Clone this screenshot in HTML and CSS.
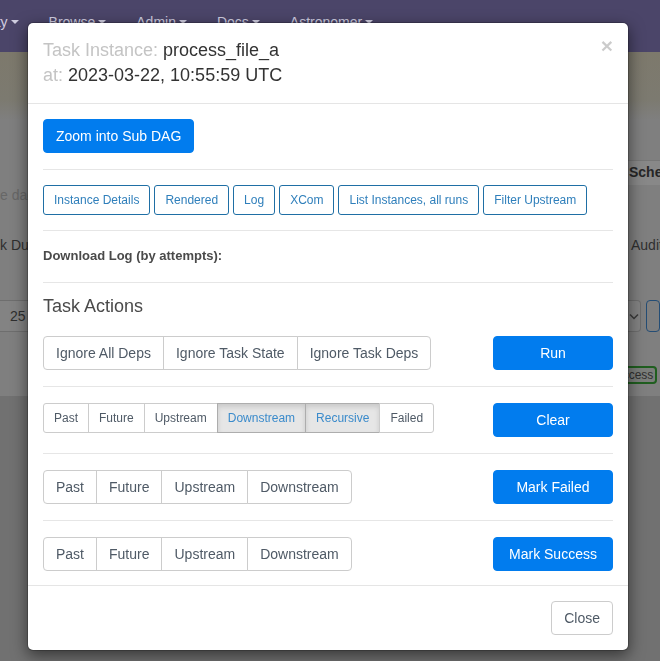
FILE: index.html
```html
<!DOCTYPE html>
<html>
<head>
<meta charset="utf-8">
<title>Task Instance</title>
<link rel="stylesheet" href="styles.css">
</head>
<body>
<div class="page">
  <nav class="navbar">
    <ul class="nav-menu">
      <li class="nav-item nav-first">Security<span class="caret"></span></li>
      <li class="nav-item">Browse<span class="caret"></span></li>
      <li class="nav-item">Admin<span class="caret"></span></li>
      <li class="nav-item">Docs<span class="caret"></span></li>
      <li class="nav-item">Astronomer<span class="caret"></span></li>
    </ul>
  </nav>
  <div class="alert-band"></div>
  <div class="bg-content">
    <div class="bg-row row-tabs"><div class="bg-left"></div><div></div><div class="tab">Schedule</div></div>
    <div class="bg-row row-desc"><div class="bg-left muted-text">e dag runs</div></div>
    <div class="bg-row row-labels"><div class="bg-left dark-text">k Duration</div><div></div><div class="check-label"><span class="checkbox"></span>Audit Log</div></div>
    <div class="bg-row row-controls">
      <div class="bg-left select-left">25</div><div></div>
      <div class="controls-right">
        <span class="select-right"><svg width="10" height="7" viewBox="0 0 10 7"><path d="M1 1.5 L5 5.5 L9 1.5" fill="none" stroke="#3a3a3a" stroke-width="1.5"/></svg></span>
        <span class="blue-box"></span>
      </div>
    </div>
    <div class="bg-row row-badge"><div class="bg-left"></div><div></div><div class="badge">success</div></div>
  </div>
  <div class="bg-lower"></div>
</div>

<div class="modal">
  <div class="modal-dialog">
    <div class="modal-content">
      <div class="modal-header">
        <button class="close" type="button">×</button>
        <h4 class="modal-title"><span class="lbl">Task Instance:</span> process_file_a<br><span class="lbl">at:</span> 2023-03-22, 10:55:59 UTC</h4>
      </div>
      <div class="modal-body">
        <button class="btn btn-primary" type="button">Zoom into Sub DAG</button>
        <hr class="divider divider-first">
        <div class="link-row">
          <button class="btn btn-sm btn-link-outline" type="button">Instance Details</button>
          <button class="btn btn-sm btn-link-outline" type="button">Rendered</button>
          <button class="btn btn-sm btn-link-outline" type="button">Log</button>
          <button class="btn btn-sm btn-link-outline" type="button">XCom</button>
          <button class="btn btn-sm btn-link-outline" type="button">List Instances, all runs</button>
          <button class="btn btn-sm btn-link-outline" type="button">Filter Upstream</button>
        </div>
        <hr class="divider">
        <div class="download">Download Log (by attempts):</div>
        <hr class="divider divider-download">
        <h4 class="section-title">Task Actions</h4>

        <div class="action-row">
          <div class="btn-group">
            <button class="btn btn-default" type="button">Ignore All Deps</button>
            <button class="btn btn-default" type="button">Ignore Task State</button>
            <button class="btn btn-default" type="button">Ignore Task Deps</button>
          </div>
          <button class="btn btn-primary btn-action" type="button">Run</button>
        </div>
        <hr class="divider divider-action">

        <div class="action-row">
          <div class="btn-group">
            <button class="btn btn-sm btn-default" type="button">Past</button>
            <button class="btn btn-sm btn-default" type="button">Future</button>
            <button class="btn btn-sm btn-default" type="button">Upstream</button>
            <button class="btn btn-sm btn-default active" type="button">Downstream</button>
            <button class="btn btn-sm btn-default active" type="button">Recursive</button>
            <button class="btn btn-sm btn-default" type="button">Failed</button>
          </div>
          <button class="btn btn-primary btn-action" type="button">Clear</button>
        </div>
        <hr class="divider divider-action">

        <div class="action-row">
          <div class="btn-group">
            <button class="btn btn-default" type="button">Past</button>
            <button class="btn btn-default" type="button">Future</button>
            <button class="btn btn-default" type="button">Upstream</button>
            <button class="btn btn-default" type="button">Downstream</button>
          </div>
          <button class="btn btn-primary btn-action" type="button">Mark Failed</button>
        </div>
        <hr class="divider divider-action">

        <div class="action-row">
          <div class="btn-group">
            <button class="btn btn-default" type="button">Past</button>
            <button class="btn btn-default" type="button">Future</button>
            <button class="btn btn-default" type="button">Upstream</button>
            <button class="btn btn-default" type="button">Downstream</button>
          </div>
          <button class="btn btn-primary btn-action" type="button">Mark Success</button>
        </div>
      </div>
      <div class="modal-footer">
        <button class="btn btn-default" type="button">Close</button>
      </div>
    </div>
  </div>
</div>
</body>
</html>
```

FILE: styles.css
```css
* { box-sizing: border-box; }

html, body {
  margin: 0;
  padding: 0;
  width: 660px;
  height: 661px;
  overflow: hidden;
  font-family: "Liberation Sans", Arial, sans-serif;
  font-size: 14px;
  color: #51504f;
}

/* ---------- dimmed background page ---------- */
.page {
  width: 660px;
  height: 661px;
  background: #7f7f7f;
  display: flex;
  flex-direction: column;
}

.navbar {
  height: 52px;
  background: #4b4569;
  flex: none;
}

.nav-menu {
  list-style: none;
  margin: 0;
  padding: 12px 0 0 0;
  display: flex;
  gap: 30px;
  white-space: nowrap;
}

.nav-item {
  color: #cfcde0;
  font-size: 14px;
  line-height: 20px;
  display: flex;
  align-items: center;
}

.nav-first { margin-left: -43px; }

.caret {
  display: inline-block;
  width: 0;
  height: 0;
  margin-left: 3px;
  border-top: 4px solid #cfcde0;
  border-left: 4px solid transparent;
  border-right: 4px solid transparent;
}

.alert-band {
  height: 68px;
  background: linear-gradient(#7d796c, #7c7a70 70%, #7f7f7f);
  flex: none;
}

.bg-content {
  flex: none;
  display: flex;
  flex-direction: column;
}

.bg-row {
  display: grid;
  grid-template-columns: 28px 600px 32px;
  white-space: nowrap;
}

.bg-left { overflow: hidden; }

.row-tabs {
  margin-top: 40px;
  height: 25px;
}

.tab {
  background: #888888;
  border-top: 1px solid #777;
  color: #262626;
  font-weight: bold;
  font-size: 14px;
  line-height: 22px;
  padding-left: 1px;
}

.row-desc { height: 20px; line-height: 20px; }
.muted-text { color: #676767; font-size: 14px; }

.row-labels {
  margin-top: 30px;
  height: 20px;
  line-height: 20px;
}
.dark-text { color: #2f2f2f; font-size: 14px; }
.check-label {
  color: #2f2f2f;
  font-size: 14px;
  display: flex;
  align-items: center;
}
.checkbox {
  display: inline-block;
  width: 5px;
  height: 13px;
  border-radius: 3px;
  background: #3a3a3a;
  margin-right: 3px;
}

.row-controls {
  margin-top: 45px;
  height: 32px;
}
.select-left {
  background: #838383;
  border-top: 1px solid #6e6e6e;
  border-bottom: 1px solid #6e6e6e;
  color: #2f2f2f;
  font-size: 14px;
  line-height: 30px;
  padding-left: 10px;
}
.controls-right {
  display: flex;
  gap: 5px;
}
.select-right {
  width: 20px;
  height: 32px;
  background: #838383;
  border: 1px solid #6e6e6e;
  border-left: none;
  border-radius: 0 4px 4px 0;
  display: flex;
  align-items: center;
  justify-content: center;
}
.blue-box {
  width: 20px;
  height: 32px;
  border: 1px solid #244d75;
  border-radius: 4px;
}

.row-badge {
  margin-top: 34px;
  height: 18px;
}
.badge {
  justify-self: start;
  margin-left: -22px;
  border: 2px solid #1f5e1f;
  border-radius: 4px;
  color: #2f2f2f;
  font-size: 12px;
  line-height: 14px;
  padding: 0 2px;
  background: #7b7e7b;
}

.bg-lower {
  flex: 1;
  margin-top: 12px;
  background: #717171;
}

/* ---------- modal ---------- */
.modal {
  position: fixed;
  inset: 0;
}

.modal-dialog {
  width: 602px;
  margin: 22px 0 0 27px;
}

.modal-content {
  background: #fff;
  border: 1px solid rgba(0, 0, 0, 0.2);
  border-radius: 6px;
  box-shadow: 0 5px 15px rgba(0, 0, 0, 0.5);
  background-clip: padding-box;
}

.modal-header {
  padding: 15px;
  border-bottom: 1px solid #e5e5e5;
}

.close {
  float: right;
  background: none;
  border: 0;
  padding: 0;
  margin-top: -3px;
  font-family: "Liberation Sans", Arial, sans-serif;
  font-size: 21px;
  font-weight: bold;
  line-height: 1;
  color: #000;
  opacity: 0.2;
}

.modal-title {
  margin: 0;
  font-size: 18px;
  font-weight: normal;
  line-height: 25px;
  color: #333;
}

.lbl { color: #c4c4c4; }

.modal-body {
  padding: 15px 15px 14px;
}

.divider {
  margin: 15px 0;
  border: 0;
  border-top: 1px solid #e6e6e6;
  height: 0;
}
.divider-first { margin-top: 16px; }
.divider-download { margin-top: 16px; margin-bottom: 13px; }
.divider-action { margin: 16px 0; }

/* buttons */
.btn {
  display: inline-block;
  font-family: "Liberation Sans", Arial, sans-serif;
  font-size: 14px;
  line-height: 20px;
  padding: 6px 12px;
  border: 1px solid transparent;
  border-radius: 4px;
  text-align: center;
  white-space: nowrap;
  cursor: pointer;
  margin: 0;
}

.btn-sm {
  font-size: 12px;
  line-height: 18px;
  padding: 5px 10px;
  border-radius: 3px;
}

.btn-primary {
  background: #017cee;
  border-color: #017cee;
  color: #fff;
}

.btn-default {
  background: #fff;
  border-color: #cccccc;
  color: #4f5a66;
}

.btn-default.active {
  background: #e6e6e6;
  border-color: #adadad;
  color: #3b8bcb;
  box-shadow: inset 0 3px 5px rgba(0, 0, 0, 0.125);
}

.btn-link-outline {
  background: #fff;
  border-color: #1f6fa5;
  color: #2f7fbb;
}

.link-row {
  display: flex;
  gap: 4px;
}

.download {
  font-size: 13px;
  font-weight: bold;
  line-height: 20px;
  color: #4a4a4a;
}

.section-title {
  margin: 0 0 20px;
  font-size: 18px;
  font-weight: normal;
  line-height: 20px;
  color: #4a4a4a;
}

.action-row {
  display: flex;
  justify-content: space-between;
  align-items: flex-start;
}

.btn-group {
  display: flex;
}
.btn-group .btn { border-radius: 0; }
.btn-group .btn + .btn { margin-left: -1px; }
.btn-group .btn:first-child { border-radius: 4px 0 0 4px; }
.btn-group .btn:last-child { border-radius: 0 4px 4px 0; }
.btn-group .btn-sm:first-child { border-radius: 3px 0 0 3px; }
.btn-group .btn-sm:last-child { border-radius: 0 3px 3px 0; }

.btn-action {
  width: 120px;
}

.modal-footer {
  padding: 15px;
  border-top: 1px solid #e5e5e5;
  text-align: right;
}
```
